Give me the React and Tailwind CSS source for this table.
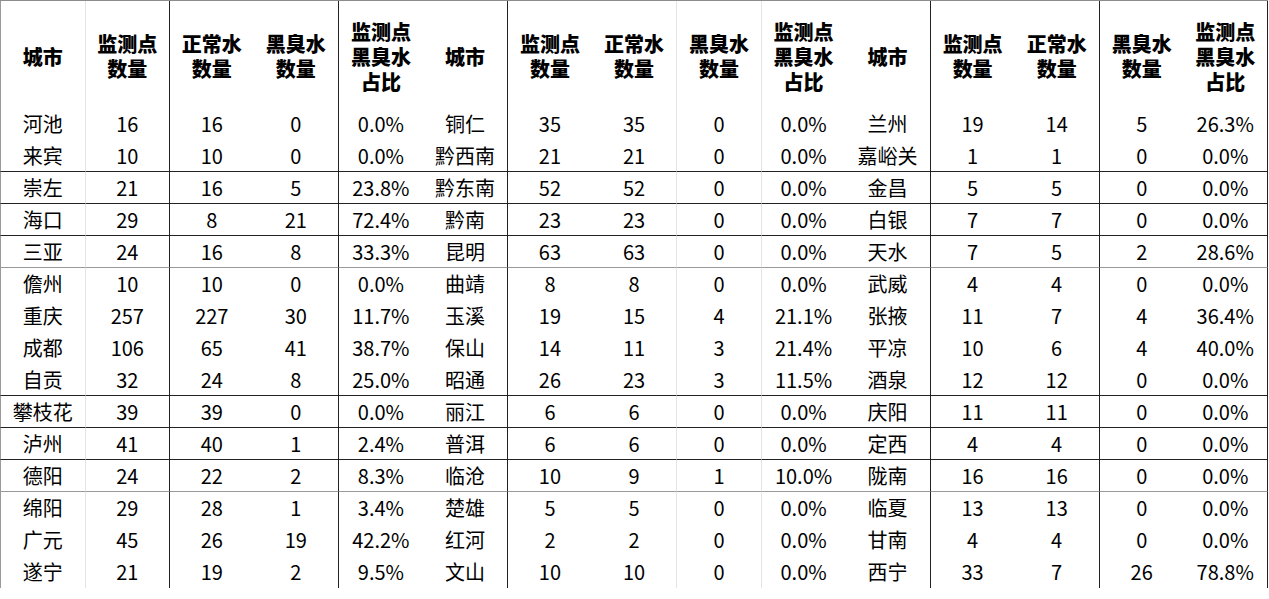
import React from 'react';

// column groups repeat 3 times: 城市 / 监测点数量 / 正常水数量 / 黑臭水数量 / 占比
const headers = [
  ['城市'],
  ['监测点', '数量'],
  ['正常水', '数量'],
  ['黑臭水', '数量'],
  ['监测点', '黑臭水', '占比'],
];

const rows = [
  ['河池', 16, 16, 0, '0.0%', '铜仁', 35, 35, 0, '0.0%', '兰州', 19, 14, 5, '26.3%'],
  ['来宾', 10, 10, 0, '0.0%', '黔西南', 21, 21, 0, '0.0%', '嘉峪关', 1, 1, 0, '0.0%'],
  ['崇左', 21, 16, 5, '23.8%', '黔东南', 52, 52, 0, '0.0%', '金昌', 5, 5, 0, '0.0%'],
  ['海口', 29, 8, 21, '72.4%', '黔南', 23, 23, 0, '0.0%', '白银', 7, 7, 0, '0.0%'],
  ['三亚', 24, 16, 8, '33.3%', '昆明', 63, 63, 0, '0.0%', '天水', 7, 5, 2, '28.6%'],
  ['儋州', 10, 10, 0, '0.0%', '曲靖', 8, 8, 0, '0.0%', '武威', 4, 4, 0, '0.0%'],
  ['重庆', 257, 227, 30, '11.7%', '玉溪', 19, 15, 4, '21.1%', '张掖', 11, 7, 4, '36.4%'],
  ['成都', 106, 65, 41, '38.7%', '保山', 14, 11, 3, '21.4%', '平凉', 10, 6, 4, '40.0%'],
  ['自贡', 32, 24, 8, '25.0%', '昭通', 26, 23, 3, '11.5%', '酒泉', 12, 12, 0, '0.0%'],
  ['攀枝花', 39, 39, 0, '0.0%', '丽江', 6, 6, 0, '0.0%', '庆阳', 11, 11, 0, '0.0%'],
  ['泸州', 41, 40, 1, '2.4%', '普洱', 6, 6, 0, '0.0%', '定西', 4, 4, 0, '0.0%'],
  ['德阳', 24, 22, 2, '8.3%', '临沧', 10, 9, 1, '10.0%', '陇南', 16, 16, 0, '0.0%'],
  ['绵阳', 29, 28, 1, '3.4%', '楚雄', 5, 5, 0, '0.0%', '临夏', 13, 13, 0, '0.0%'],
  ['广元', 45, 26, 19, '42.2%', '红河', 2, 2, 0, '0.0%', '甘南', 4, 4, 0, '0.0%'],
  ['遂宁', 21, 19, 2, '9.5%', '文山', 10, 10, 0, '0.0%', '西宁', 33, 7, 26, '78.8%'],
];

// left border style per column index
const leftBorder = [
  'border-l border-l-[#9a9a9a]',
  'border-l border-l-[#e4e4e4]',
  'border-l border-l-[#222]',
  '',
  'border-l border-l-[#222]',
  '',
  'border-l border-l-[#222]',
  '',
  'border-l border-l-[#e4e4e4]',
  'border-l border-l-[#e4e4e4]',
  '',
  'border-l border-l-[#222]',
  '',
  'border-l border-l-[#222]',
  'border-r border-r-[#222]',
];

// bottom border style per data row
const rowBottom = {
  1: 'border-b border-b-[#222]',
  2: 'border-b border-b-[#222]',
  3: 'border-b border-b-[#222]',
  4: 'border-b border-b-[#999]',
  8: 'border-b border-b-[#222]',
  9: 'border-b border-b-[#222]',
  10: 'border-b border-b-[#222]',
  11: 'border-b border-b-[#999]',
};

export default function App() {
  return (
    <div className="w-[1269px] h-[599px] bg-white text-black font-['Noto_Sans_CJK_SC',sans-serif]">
      <div className="w-[1268px] grid grid-cols-[repeat(15,minmax(0,1fr))] border-t border-t-[#8c8c8c]">
        {[0, 1, 2].map((g) =>
          headers.map((lines, i) => (
            <div
              key={`h-${g}-${i}`}
              className={`h-[107px] flex flex-col items-center justify-center pt-[3px] text-[20px] font-black ${leftBorder[g * 5 + i]}`}
            >
              {lines.map((t) => (
                <span key={t} className="block h-[25px] leading-[25px]">{t}</span>
              ))}
            </div>
          ))
        )}
        {rows.map((row, r) =>
          row.map((cell, c) => (
            <div
              key={`${r}-${c}`}
              className={`h-8 flex items-center justify-center text-[20px] leading-none whitespace-nowrap ${leftBorder[c]} ${rowBottom[r] || ''}`}
            >
              {cell}
            </div>
          ))
        )}
      </div>
    </div>
  );
}
